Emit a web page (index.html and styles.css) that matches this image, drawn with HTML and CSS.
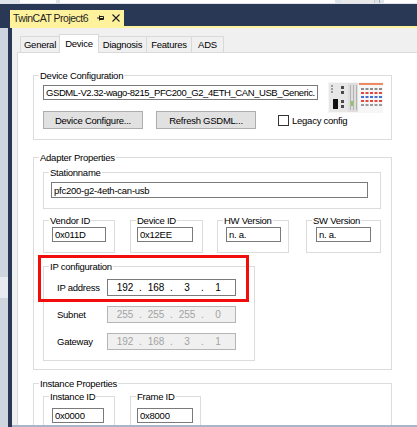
FILE: index.html
```html
<!DOCTYPE html>
<html lang="en">
<head>
    <meta charset="UTF-8">
    <title>TwinCAT Project6 - Device</title>
    <link rel="stylesheet" href="styles.css">
</head>
<body>
    <div class="toolstrip">
        <span class="tool-box tb-a"></span>
        <span class="tool-box tb-b"></span>
        <span class="tool-btn"></span>
        <span class="tool-sep"></span>
        <span class="tool-box tb-c"></span>
    </div>

    <div class="docband">
        <div class="doctab">
            <span class="doctab-title">TwinCAT Project6</span>
            <svg class="pin" width="7" height="6" viewBox="0 0 7 6">
                <path d="M0 3H2.5M2.5 0.5V5.5M2.5 1.5H6.5V4.5H2.5M2.5 3.5H6.5" fill="none" stroke="#1e1e1e" stroke-width="1"/>
            </svg>
            <svg class="close" width="8" height="8" viewBox="0 0 8 8">
                <path d="M0.5 0.5L7.5 7.5M7.5 0.5L0.5 7.5" fill="none" stroke="#1e1e1e" stroke-width="1.1"/>
            </svg>
        </div>
        <div class="docline"></div>
    </div>

    <div class="workarea">
        <div class="sidepanel"><div class="side-hl"></div></div>

        <div class="editor">
            <div class="tabstrip">
                <div class="tab tab-general">General</div>
                <div class="tab tab-device active">Device</div>
                <div class="tab tab-diag">Diagnosis</div>
                <div class="tab tab-features">Features</div>
                <div class="tab tab-ads">ADS</div>
            </div>

            <div class="tabpage">
                <!-- Device Configuration -->
                <fieldset class="group grp-wide grp-devcfg">
                    <legend>Device Configuration</legend>
                    <div class="devcfg-top">
                        <input class="textbox gsdml" type="text" readonly value="GSDML-V2.32-wago-8215_PFC200_G2_4ETH_CAN_USB_Generic.">
                        <svg class="device-pic" width="55" height="31" viewBox="0 0 55 31">
                            <rect x="0" y="0" width="55" height="31" fill="#f6f6f6"/>
                            <rect x="1" y="1" width="19" height="29" fill="#e7e7e7"/>
                            <rect x="3" y="3" width="2" height="2" fill="#9c9c9c"/>
                            <rect x="3" y="6" width="2" height="2" fill="#9c9c9c"/>
                            <rect x="3" y="9" width="2" height="2" fill="#9c9c9c"/>
                            <rect x="13" y="4" width="3" height="3" fill="#4b4b4b"/>
                            <rect x="13" y="9" width="3" height="3" fill="#4b4b4b"/>
                            <rect x="5" y="17" width="5" height="10" fill="#111"/>
                            <rect x="13" y="18" width="3" height="3" fill="#4b4b4b"/>
                            <rect x="13" y="23" width="3" height="3" fill="#4b4b4b"/>
                            <rect x="20" y="1" width="10" height="29" fill="#dedede"/>
                            <rect x="22" y="3" width="1" height="25" fill="#b3b3b3"/>
                            <rect x="25" y="3" width="1" height="25" fill="#b3b3b3"/>
                            <rect x="28" y="3" width="1" height="25" fill="#b3b3b3"/>
                            <rect x="23" y="19" width="2" height="5" fill="#8ccb50"/>
                            <rect x="31" y="1" width="24" height="2" fill="#ee8a62"/>
                            <g fill="#8d8d8d">
                                <rect x="33" y="6" width="3" height="2"/><rect x="37.5" y="6" width="3" height="2"/><rect x="42" y="6" width="3" height="2"/><rect x="46.5" y="6" width="3" height="2"/><rect x="51" y="6" width="3" height="2"/>
                            </g>
                            <g fill="#e04a3c">
                                <rect x="33" y="10" width="3" height="2"/><rect x="37.5" y="10" width="3" height="2"/><rect x="42" y="10" width="3" height="2"/><rect x="46.5" y="10" width="3" height="2"/><rect x="51" y="10" width="3" height="2"/>
                            </g>
                            <g fill="#4470cf">
                                <rect x="33" y="14" width="3" height="2"/><rect x="37.5" y="14" width="3" height="2"/><rect x="42" y="14" width="3" height="2"/><rect x="46.5" y="14" width="3" height="2"/><rect x="51" y="14" width="3" height="2"/>
                            </g>
                            <g fill="#e04a3c">
                                <rect x="33" y="18" width="3" height="2"/><rect x="37.5" y="18" width="3" height="2"/><rect x="42" y="18" width="3" height="2"/><rect x="46.5" y="18" width="3" height="2"/><rect x="51" y="18" width="3" height="2"/>
                            </g>
                            <g fill="#9a9a9a">
                                <rect x="33" y="22" width="3" height="2"/><rect x="37.5" y="22" width="3" height="2"/><rect x="42" y="22" width="3" height="2"/><rect x="46.5" y="22" width="3" height="2"/><rect x="51" y="22" width="3" height="2"/>
                            </g>
                        </svg>
                    </div>
                    <div class="devcfg-actions">
                        <button class="btn">Device Configure...</button>
                        <button class="btn">Refresh GSDML...</button>
                        <label class="check"><span class="checkbox"></span>Legacy config</label>
                    </div>
                </fieldset>

                <!-- Adapter Properties -->
                <fieldset class="group grp-wide grp-adapter">
                    <legend>Adapter Properties</legend>

                    <fieldset class="group grp-station">
                        <legend>Stationname</legend>
                        <input class="textbox station-input" type="text" readonly value="pfc200-g2-4eth-can-usb">
                    </fieldset>

                    <div class="id-row">
                        <fieldset class="group id-group id-vendor">
                            <legend>Vendor ID</legend>
                            <input class="textbox" type="text" readonly value="0x011D">
                        </fieldset>
                        <fieldset class="group id-group id-device">
                            <legend>Device ID</legend>
                            <input class="textbox" type="text" readonly value="0x12EE">
                        </fieldset>
                        <fieldset class="group id-group id-hw">
                            <legend>HW Version</legend>
                            <input class="textbox" type="text" readonly value="n. a.">
                        </fieldset>
                        <fieldset class="group id-group id-sw">
                            <legend>SW Version</legend>
                            <input class="textbox" type="text" readonly value="n. a.">
                        </fieldset>
                    </div>

                    <fieldset class="group grp-ip">
                        <legend>IP configuration</legend>
                        <div class="ip-row">
                            <span class="ip-label">IP address</span>
                            <div class="ipbox"><span>192</span><i>.</i><span>168</span><i>.</i><span>3</span><i>.</i><span>1</span></div>
                        </div>
                        <div class="ip-row">
                            <span class="ip-label">Subnet</span>
                            <div class="ipbox disabled"><span>255</span><i>.</i><span>255</span><i>.</i><span>255</span><i>.</i><span>0</span></div>
                        </div>
                        <div class="ip-row">
                            <span class="ip-label">Gateway</span>
                            <div class="ipbox disabled"><span>192</span><i>.</i><span>168</span><i>.</i><span>3</span><i>.</i><span>1</span></div>
                        </div>
                    </fieldset>
                </fieldset>

                <!-- Instance Properties -->
                <fieldset class="group grp-wide grp-instance">
                    <legend>Instance Properties</legend>
                    <div class="id-row inst-row">
                        <fieldset class="group id-group inst-id">
                            <legend>Instance ID</legend>
                            <input class="textbox" type="text" readonly value="0x0000">
                        </fieldset>
                        <fieldset class="group id-group frame-id">
                            <legend>Frame ID</legend>
                            <input class="textbox" type="text" readonly value="0x8000">
                        </fieldset>
                    </div>
                </fieldset>

                <div class="highlight"></div>
            </div>
        </div>
    </div>
</body>
</html>
```

FILE: styles.css
```css
* {
    box-sizing: border-box;
}

body {
    margin: 0;
    width: 417px;
    height: 427px;
    overflow: hidden;
    background-color: #293955;
    font-family: "Liberation Sans", Arial, sans-serif;
    font-size: 9.5px;
    letter-spacing: -0.25px;
    color: #000000;
}

/* toolbar remains at the very top */
.toolstrip {
    height: 4px;
    display: flex;
    background-color: #dfe3ea;
}

.tool-box {
    height: 3px;
    background-color: #ffffff;
}

.tb-a { width: 36px; margin-left: 20px; }
.tb-b { width: 276px; margin-left: 4px; }
.tb-c { width: 33px; margin-left: 4px; }

.tool-btn {
    width: 34px;
    height: 3px;
    margin-left: 6px;
    background-color: #e9e9e9;
    border-right: 1px solid #c5c5c5;
}

.tool-sep {
    width: 1px;
    height: 3px;
    margin-left: 4px;
    background-color: #a9a9a9;
}

/* document tab band */
.docband {
    height: 24px;
    padding-top: 6px;
}

.doctab {
    display: flex;
    align-items: center;
    width: 114px;
    height: 16px;
    margin-left: 10px;
    padding-left: 3px;
    background-color: #fff29d;
    color: #1e1e1e;
}

.doctab-title {
    font-size: 10.5px;
    letter-spacing: -0.5px;
}

.pin {
    margin-left: 9px;
}

.close {
    margin-left: 8px;
}

.docline {
    height: 2px;
    margin-left: 10px;
    background-color: #fff29d;
}

/* work area */
.workarea {
    display: flex;
    height: 399px;
}

.sidepanel {
    width: 8px;
    background-color: #cfd5de;
    padding-top: 249px;
}

.side-hl {
    height: 21px;
    background-color: #e7eaf0;
}

.editor {
    flex: 1;
    display: flex;
    flex-direction: column;
    margin-left: 4px;
    background-color: #f0f0f0;
    border-bottom: 2px solid #a9b5c8;
    overflow: hidden;
}

.tabstrip {
    display: flex;
    align-items: flex-end;
    height: 24px;
    flex-shrink: 0;
    padding-left: 8px;
}

.tab {
    height: 16px;
    line-height: 15px;
    text-align: center;
    background-color: #f0f0f0;
    border: 1px solid #d9d9d9;
    border-bottom: none;
    border-right: none;
}

.tab-general { width: 39px; }
.tab-device { width: 40px; }
.tab-diag { width: 47px; }
.tab-features { width: 45px; }
.tab-ads { width: 33px; border-right: 1px solid #d9d9d9; }

.tab.active {
    position: relative;
    z-index: 1;
    height: 19px;
    line-height: 17px;
    margin-bottom: -1px;
    background-color: #ffffff;
    border-right: 1px solid #d9d9d9;
}

.tab.active + .tab {
    border-left: none;
}

.tabpage {
    position: relative;
    flex: 1;
    margin-left: 5px;
    padding-left: 15px;
    background-color: #ffffff;
    border-top: 1px solid #d9d9d9;
    border-left: 1px solid #d9d9d9;
    overflow: hidden;
}

/* group boxes: the legend sits 5px in from the left border */
.group {
    --pad: 0px;
    margin: 0;
    padding: 0 0 0 var(--pad);
    min-width: 0;
    border: 1px solid #dcdcdc;
}

.group > legend {
    height: 11px;
    line-height: 11px;
    margin-left: calc(5px - var(--pad));
    padding: 0 1px;
}

.grp-wide {
    width: 359px;
}

.textbox {
    display: block;
    height: 15px;
    padding: 0 2px;
    border: 1px solid #7a7a7a;
    background-color: #ffffff;
    font: inherit;
    letter-spacing: inherit;
    color: #000000;
    outline: none;
}

.grp-devcfg {
    --pad: 9px;
    margin-top: 17px;
    padding-right: 7px;
    padding-bottom: 10px;
}

.devcfg-top {
    display: flex;
    align-items: flex-start;
    height: 31px;
    margin-top: 1px;
}

.gsdml {
    width: 275px;
    margin-top: 3px;
    letter-spacing: -0.42px;
}

.device-pic {
    margin-left: 10px;
}

.devcfg-actions {
    display: flex;
    align-items: center;
    margin-top: -2px;
}

.btn {
    width: 100px;
    height: 18px;
    padding: 0;
    margin-right: 13px;
    background-color: #e1e1e1;
    border: 1px solid #adadad;
    font: inherit;
    letter-spacing: inherit;
    color: #000000;
}

.btn + .btn {
    margin-right: 22px;
}

.check {
    display: flex;
    align-items: center;
}

.checkbox {
    width: 11px;
    height: 11px;
    margin-right: 3px;
    border: 1px solid #333333;
    background-color: #ffffff;
}

.grp-adapter {
    --pad: 9px;
    margin-top: 12px;
    padding-bottom: 8px;
}

.grp-station {
    --pad: 7px;
    width: 338px;
    margin-top: 4px;
    padding-bottom: 10px;
}

.station-input {
    width: 317px;
    height: 16px;
    margin-top: 4px;
}

.id-row {
    display: flex;
    margin-top: 6px;
}

.id-group {
    --pad: 8px;
    padding-bottom: 10px;
}

.id-group .textbox {
    margin-top: 1px;
}

.id-vendor { width: 72px; }
.id-vendor .textbox { width: 54px; }

.id-device { --pad: 6px; width: 73px; margin-left: 15px; }
.id-device .textbox { width: 56px; }

.id-hw { width: 72px; margin-left: 14px; }
.id-hw .textbox { width: 55px; }

.id-sw { --pad: 9px; width: 75px; margin-left: 17px; }
.id-sw .textbox { width: 55px; }

.grp-ip {
    --pad: 13px;
    width: 212px;
    margin-top: 8px;
    padding-bottom: 10px;
}

.ip-row {
    display: flex;
    align-items: center;
    height: 17px;
    margin-top: 10px;
}

.ip-row:first-of-type {
    margin-top: 7px;
}

.ip-label {
    width: 50px;
}

.ipbox {
    display: flex;
    align-items: center;
    width: 129px;
    height: 17px;
    padding-left: 5px;
    border: 1px solid #7a7a7a;
    background-color: #ffffff;
    font-size: 10px;
    letter-spacing: 0;
}

.ipbox span {
    width: 24px;
    text-align: center;
}

.ipbox i {
    width: 7px;
    font-style: normal;
    text-align: center;
}

.ipbox.disabled {
    background-color: #f0f0f0;
    border-color: #b5b5b5;
    color: #a3a3a3;
}

.grp-instance {
    --pad: 9px;
    margin-top: 8px;
    padding-bottom: 10px;
}

.inst-row {
    margin-top: 2px;
}

.inst-row .textbox {
    margin-top: 6px;
}

.inst-id { width: 72px; }
.inst-id .textbox { width: 52px; }

.frame-id { --pad: 6px; width: 71px; margin-left: 15px; }
.frame-id .textbox { width: 56px; }

/* red annotation frame over the IP configuration */
.highlight {
    position: absolute;
    left: 20px;
    top: 202px;
    width: 211px;
    height: 47px;
    border: 3px solid #f20d0d;
}
```
